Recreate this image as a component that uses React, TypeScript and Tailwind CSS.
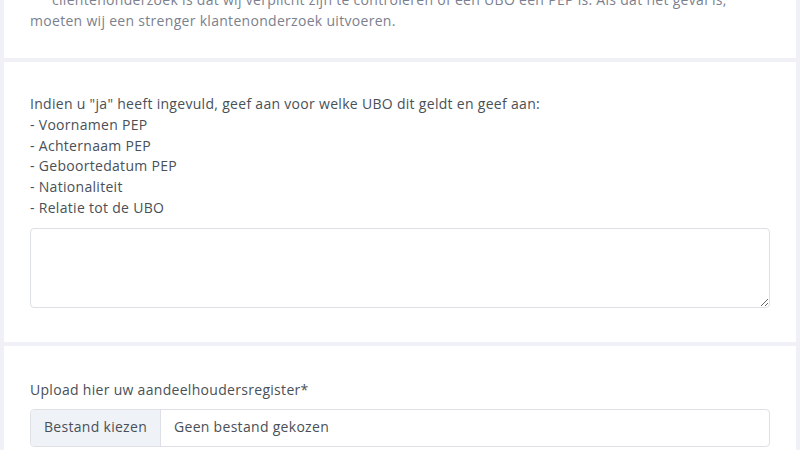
import React from "react";

const font = { fontFamily: '"Open Sans", "Liberation Sans", sans-serif' };

function App() {
  return (
    <div
      className="h-[450px] w-[800px] overflow-hidden bg-[#eff1f6] px-[4px] flex flex-col gap-[4px] tracking-[0.3px]"
      style={font}
    >
      <div className="-mt-[43px] bg-white px-[26px] pt-[32px] pb-[27px] text-[14px] leading-[21px] text-[#7b7f8e]">
        <p className="pl-[22px]">
          cliëntenonderzoek is dat wij verplicht zijn te controleren of een UBO een PEP is. Als dat het geval is,
        </p>
        <p>moeten wij een strenger klantenonderzoek uitvoeren.</p>
      </div>

      <div className="bg-white px-[26px] pt-[32px] pb-[34px] text-[14px] leading-[20.8px] text-[#495057]">
        <p>Indien u "ja" heeft ingevuld, geef aan voor welke UBO dit geldt en geef aan:</p>
        <p>- Voornamen PEP</p>
        <p>- Achternaam PEP</p>
        <p>- Geboortedatum PEP</p>
        <p>- Nationaliteit</p>
        <p>- Relatie tot de UBO</p>
        <textarea
          className="mt-[9px] block h-[80px] w-full rounded-[4px] border border-[#dde0e6] bg-white px-3 py-2 text-[14px] outline-none"
          style={font}
        />
      </div>

      <div className="bg-white px-[26px] pt-[34px] text-[14px] leading-[20.8px] text-[#495057]">
        <p>Upload hier uw aandeelhoudersregister*</p>
        <div className="mt-[8px] flex h-[38px] w-full overflow-hidden rounded-[4px] border border-[#dde0e6]">
          <div className="flex w-[130px] items-center justify-center border-r border-[#dde0e6] bg-[#eff2f7]">
            Bestand kiezen
          </div>
          <div className="flex items-center px-[13px]">Geen bestand gekozen</div>
        </div>
        <div className="h-[20px]" />
      </div>
    </div>
  );
}

export default App;
